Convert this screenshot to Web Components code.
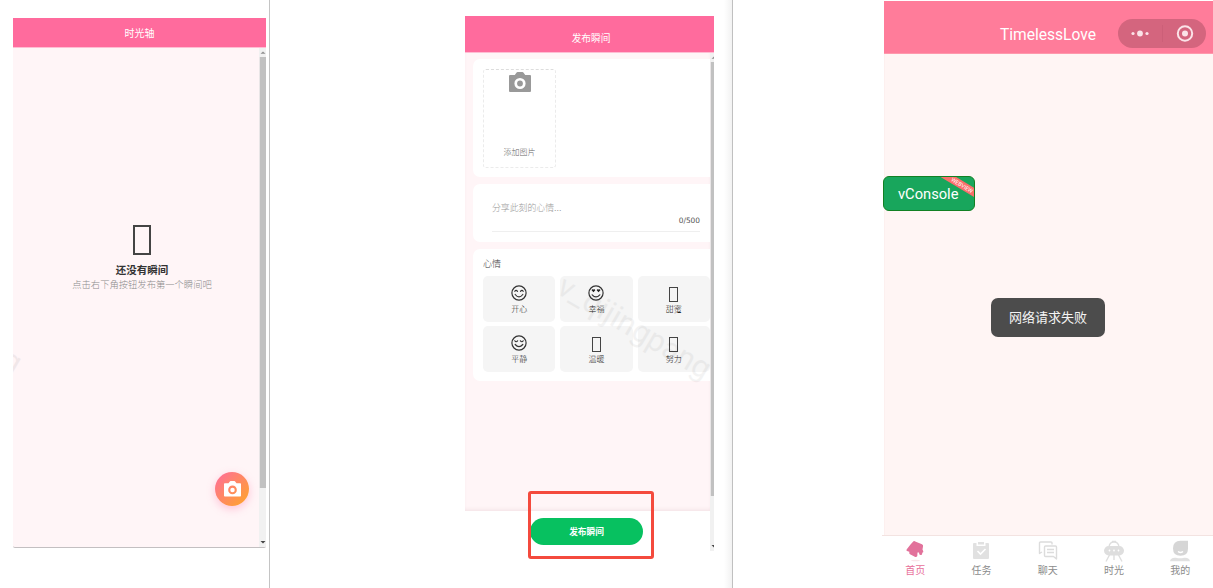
<!DOCTYPE html>
<html lang="zh-CN">
<head>
<meta charset="utf-8">
<title>TimelessLove</title>
<style>
  body {
    margin: 0;
    background: #fff;
    font-family: "Liberation Sans", "Noto Sans CJK SC", sans-serif;
  }
</style>
</head>
<body>
<love-board>
  <timeline-page slot="left"></timeline-page>
  <publish-page slot="middle"></publish-page>
  <home-page slot="right"></home-page>
</love-board>

<script>
function define(name, html) {
  const template = document.createElement('template');
  template.innerHTML = html;
  customElements.define(name, class extends HTMLElement {
    constructor() {
      super();
      this.attachShadow({ mode: 'open' });
      this.shadowRoot.appendChild(template.content.cloneNode(true));
    }
  });
}

// three columns with a thin divider between them
define('love-board', `
  <style>
    :host { display: grid; grid-template-columns: 270px 463px 480px; height: 588px; overflow: hidden; }
    div { box-sizing: border-box; height: 588px; overflow: hidden; }
    .left { padding: 18px 0 0 13px; border-right: 1px solid #c4c4c4; }
    .middle { padding: 16px 0 0 195px; border-right: 1px solid #c0c0c0; background: linear-gradient(to left, #f2f2f2, #fff 8px); }
    .right { padding: 1px 0 0 151px; }
  </style>
  <div class="left"><slot name="left"></slot></div>
  <div class="middle"><slot name="middle"></slot></div>
  <div class="right"><slot name="right"></slot></div>
`);

define('scroll-bar', `
  <style>
    :host { display: flex; flex-direction: column; width: 7px; background: #f1f1f1; overflow: hidden; }
    .thumb { box-sizing: border-box; width: 100%; height: var(--thumb); background: #c1c1c1; border-left: 1px solid #e9e6e7; }
    svg { display: block; width: 7px; height: 9px; flex: none; }
    .space { flex: 1; }
  </style>
  <svg viewBox="0 0 7 9"><path d="M1.5 5.8 4 3.4 6.5 5.8z" fill="#8f8f8f"/></svg>
  <div class="thumb"></div>
  <div class="space"></div>
  <svg viewBox="0 0 7 9"><path d="M1.5 3 6.5 3 4 5.4z" fill="#444"/></svg>
`);

define('camera-icon', `
  <style>
    :host { display: block; width: 22px; }
    svg { display: block; width: 100%; }
  </style>
  <svg viewBox="0 0 22 20">
    <path fill="currentColor" fill-rule="evenodd" d="M1 3h4.8l1.8-2.5Q8 0 8.500 0h5q.5 0 .9.500L16.200 3H21q1 0 1 1v15q0 1-1 1H1q-1 0-1-1V4q0-1 1-1zm10 2.900a5.600 5.600 0 1 0 0 11.200 5.600 5.600 0 0 0 0-11.200z"/>
    <circle cx="11" cy="11.500" r="2.900" fill="currentColor"/>
  </svg>
`);

define('timeline-page', `
  <style>
    :host { display: flex; flex-direction: column; width: 253px; height: 530px; position: relative; }
    header { height: 29px; line-height: 31px; background: #ff6b9d; color: #fff; font-size: 10px; text-align: center; border-bottom: 1px solid #ffbdd3; }
    .body { display: flex; flex: 1; min-height: 0; border-bottom: 1px solid #c3bfc1; border-radius: 0 0 2px 2px; overflow: hidden; background: #fff5f7; }
    .empty { flex: 1; display: flex; flex-direction: column; align-items: center; padding: 177px 0 0 12px; box-sizing: border-box; position: relative; }
    .box { box-sizing: border-box; width: 18px; height: 30px; border: 2px solid #444; flex: none; }
    .title { margin-top: 6px; font-size: 10.500px; line-height: 18px; font-weight: bold; color: #333; }
    .hint { font-size: 9.300px; line-height: 13px; color: #8c8c8c; font-weight: 300; white-space: nowrap; }
    /* tail of the page watermark */
    .mark { position: absolute; left: -10px; top: 295px; font: 31px/36px Roboto, sans-serif; color: #000; opacity: .05; transform: rotate(30.500deg); }
    .fab { position: absolute; left: 202px; top: 454px; width: 34px; height: 34px; border-radius: 50%; display: flex; align-items: center; justify-content: center; background: linear-gradient(135deg, #ff6b9d, #ffa726); box-shadow: 0 3px 8px rgba(255, 107, 157, .35); color: #fff; }
    .fab camera-icon { width: 17px; }
    scroll-bar { --thumb: 431px; }
  </style>
  <header>时光轴</header>
  <div class="body">
    <div class="empty">
      <div class="box"></div>
      <div class="title">还没有瞬间</div>
      <div class="hint">点击右下角按钮发布第一个瞬间吧</div>
      <div class="mark">g</div>
    </div>
    <scroll-bar></scroll-bar>
  </div>
  <div class="fab"><camera-icon></camera-icon></div>
`);

define('mood-item', `
  <style>
    :host { display: flex; flex-direction: column; align-items: center; box-sizing: border-box; height: 45.500px; padding-top: 8.500px; background: #f5f5f5; border-radius: 5px; color: #222; font-size: 8px; line-height: 12px; font-weight: 300; }
    .face { height: 19.500px; display: flex; align-items: flex-start; }
  </style>
  <div class="face"><slot name="face"></slot></div>
  <slot></slot>
`);

define('publish-page', `
  <style>
    :host { display: flex; flex-direction: column; width: 249px; height: 536px; position: relative; }
    header { height: 36px; line-height: 45px; padding-left: 3px; background: #ff6b9d; color: #fff; font-size: 9.700px; text-align: center; border-bottom: 1px solid #ffbdd3; }
    .body { flex: 1; display: flex; min-height: 0; }
    .main { width: 245px; display: flex; flex-direction: column; overflow: hidden; position: relative; }
    .feed { height: 458px; box-sizing: border-box; background: #fff5f7; padding: 6px 0 0 8px; box-shadow: inset 0 -3px 4px -2px rgba(120, 40, 60, .1); display: flex; flex-direction: column; gap: 7px; }
    .card { box-sizing: border-box; width: 250px; background: #fff; border-radius: 7px; padding: 10px; }
    .photos { height: 118px; }
    .text { height: 58px; padding: 18px 10px 0 19px; }
    .moods { height: 132px; }
    .add { box-sizing: border-box; width: 73px; height: 99px; border: 1px dashed #ebebeb; border-top-color: #ddd; border-radius: 3px; display: flex; flex-direction: column; align-items: center; justify-content: space-between; padding: 2px 0 8px; color: #999; font-size: 8px; line-height: 13px; }
    .add span { color: #666; font-weight: 300; }
    .field { width: 208px; border-bottom: 1px solid #efefef; height: 29px; display: flex; flex-direction: column; font-size: 8.900px; line-height: 13px; color: #999; font-weight: 300; }
    .count { align-self: flex-end; font: 7.400px/12px "DejaVu Sans", sans-serif; color: #555; }
    .label { font-size: 9px; line-height: 10px; color: #333; font-weight: 300; }
    .grid { display: grid; grid-template-columns: repeat(3, 72.300px); gap: 4.500px 5px; margin-top: 7px; }
    svg { width: 16px; height: 16px; display: block; fill: none; stroke: #333; stroke-width: 1.200; stroke-linecap: round; }
    .box { box-sizing: border-box; width: 9px; height: 15px; margin-top: 2px; border: 1px solid #444; }
    .mark { position: absolute; left: 95px; top: 213px; font: 31px/36px Roboto, sans-serif; color: #000; opacity: .045; transform: rotate(30.500deg); transform-origin: 0 50%; white-space: nowrap; }
    .submit { width: 113px; height: 27px; margin: 7px 0 0 65px; border-radius: 14px; background: #07c160; color: #fff; font-size: 8.700px; line-height: 28px; font-weight: bold; text-align: center; }
    .frame { position: absolute; left: 63px; top: 475px; width: 126px; height: 68px; box-sizing: border-box; border: 3px solid #f44a3d; border-radius: 3px; }
    scroll-bar { width: 4px; --thumb: 434px; height: 498px; }
  </style>
  <header>发布瞬间</header>
  <div class="body">
    <div class="main">
      <div class="feed">
        <div class="card photos">
          <div class="add"><camera-icon></camera-icon><span>添加图片</span></div>
        </div>
        <div class="card text">
          <div class="field"><span>分享此刻的心情...</span><span class="count">0/500</span></div>
        </div>
        <div class="card moods">
          <div class="label">心情</div>
          <div class="grid">
            <mood-item>
              <svg slot="face" viewBox="0 0 16 16"><circle cx="8" cy="8" r="7.100"/><path d="M3.800 6.300Q5 4.300 6.500 6.300M9.500 6.300Q11 4.300 12.200 6.300M4.200 9.500Q8 14.300 11.800 9.500"/></svg>开心
            </mood-item>
            <mood-item>
              <svg slot="face" viewBox="0 0 16 16"><circle cx="8" cy="8" r="7.100"/><path d="M4.200 9.800Q8 14 11.800 9.800"/><path d="M5.500 7.300 3.600 5.200Q3.900 3.600 5.500 4.600 7 3.600 7.300 5.200zM10.500 7.300 8.700 5.200Q9 3.600 10.500 4.600 12.100 3.600 12.400 5.200z" fill="#222" stroke="none"/></svg>幸福
            </mood-item>
            <mood-item><div slot="face" class="box"></div>甜蜜</mood-item>
            <mood-item>
              <svg slot="face" viewBox="0 0 16 16"><circle cx="8" cy="8" r="7.100"/><path d="M3.800 5.800Q5 7.700 6.600 5.800M9.400 5.800Q11 7.700 12.200 5.800M4.200 9.500Q8 13.800 11.800 9.500"/></svg>平静
            </mood-item>
            <mood-item><div slot="face" class="box"></div>温暖</mood-item>
            <mood-item><div slot="face" class="box"></div>努力</mood-item>
          </div>
        </div>
      </div>
      <div class="submit">发布瞬间</div>
      <div class="mark">v_qijingpang</div>
    </div>
    <scroll-bar></scroll-bar>
  </div>
  <div class="frame"></div>
`);

define('tab-item', `
  <style>
    :host { display: flex; flex-direction: column; align-items: center; color: #8c8c8c; font-size: 10px; line-height: 15px; padding-top: 4px; }
    :host([active]) { color: #e8709a; }
    .icon { height: 22px; margin-bottom: 1px; }
  </style>
  <div class="icon"><slot name="icon"></slot></div>
  <slot></slot>
`);

define('home-page', `
  <style>
    :host { display: flex; flex-direction: column; width: 329px; height: 587px; position: relative; font-family: Roboto, "Noto Sans CJK SC", sans-serif; }
    header { display: flex; align-items: center; justify-content: flex-end; height: 53px; box-sizing: border-box; padding: 13px 7px 0 0; background: #ff7c9a; border-bottom: 1px solid #ff98ac; color: #fff; font-size: 15.600px; gap: 22px; }
    header span { padding-top: 2px; }
    .capsule { display: block; width: 88px; height: 29px; }
    main { flex: 1; background: #fff5f4; border-left: 1px solid #fdf0ef; }
    .console { position: absolute; left: -1px; top: 175px; width: 92px; height: 35px; box-sizing: border-box; border: 1.500px solid #128023; border-radius: 6px; background: #18a65c; color: #fff; font-size: 14.700px; line-height: 34px; padding-left: 14px; overflow: hidden; }
    .ribbon { position: absolute; left: 48px; top: 3px; width: 56px; height: 8px; line-height: 8px; background: #fb6d6b; font-size: 5.500px; text-align: center; text-indent: 5px; transform: rotate(31deg); }
    .toast { position: absolute; left: 107px; top: 297px; width: 114px; height: 39px; line-height: 39px; border-radius: 7px; background: #4c4c4c; color: #f4f4f4; font-size: 13px; text-align: center; }
    nav { display: grid; grid-template-columns: repeat(5, 66.300px); height: 53px; box-sizing: border-box; border-top: 1px solid #f3e3e1; background: #fff; margin-left: -2px; }
    nav svg { display: block; width: 22px; height: 22px; }
  </style>
  <header>
    <span>TimelessLove</span>
    <svg class="capsule" viewBox="0 0 88 29">
      <rect width="88" height="29" rx="14.500" fill="#d4657e"/>
      <path d="M44.500 6v17" stroke="#cc5f78"/>
      <g fill="#fbe3e8"><circle cx="15" cy="14.500" r="1.600"/><circle cx="22" cy="14.500" r="2.900"/><circle cx="29" cy="14.500" r="1.600"/><circle cx="67" cy="14.500" r="3"/></g>
      <circle cx="67" cy="14.500" r="7.200" fill="none" stroke="#fbe3e8" stroke-width="2"/>
    </svg>
  </header>
  <main></main>
  <nav>
    <tab-item active>
      <svg slot="icon" viewBox="0 0 22 22"><ellipse cx="11.500" cy="20.500" rx="4.500" ry=".8" fill="#fae6ea"/><path d="M9.500 1.300Q10.300.8 11.200 1.400L18 4.300Q19.500 5 19 6.500L18.500 9.500 19.300 11.300Q19.500 12.500 18.300 12.800L18 14.500Q16.300 15.800 15.300 14.300L15 12.500H13.500L13.300 16Q12.500 17.500 10.800 16.800L6 14.300Q5 13.800 5.300 11.800L3 11Q1.800 10.300 2.800 9.200L6.500 4.500z" fill="#e2729b"/></svg>首页
    </tab-item>
    <tab-item>
      <svg slot="icon" viewBox="0 0 22 22"><path d="M4 3h2.500v3h9V3H18q1 0 1 1v14q0 1-1 1H4q-1 0-1-1V4q0-1 1-1z" fill="#e1e1e1"/><path d="M8 2h6v2.500H8z" fill="#e1e1e1"/><path d="m7.500 11 3 3 5-5" fill="none" stroke="#fff" stroke-width="1.600"/></svg>任务
    </tab-item>
    <tab-item>
      <svg slot="icon" viewBox="0 0 22 22" fill="none" stroke="#dcdcdc" stroke-width="1.400" stroke-linejoin="round"><path d="M15 4.500V3q0-1-1-1H3.500q-1 0-1 1v10.500L5 12"/><path d="M8.500 6h10q1 0 1 1v12l-3-2.500h-8q-1 0-1-1V7q0-1 1-1zM10 9.500h7M10 12.500h7"/></svg>聊天
    </tab-item>
    <tab-item>
      <svg slot="icon" viewBox="0 0 22 22"><g fill="none" stroke="#dedede" stroke-width="1.400"><path d="M6 7Q6.500 2 11 2T16 7M9 1.500h4M7 14 3 21.500M11 14v6M15 14l4 7.500"/></g><rect x="1" y="6" width="20" height="9.500" rx="4.700" fill="#dedede"/><g fill="#fff"><circle cx="6.500" cy="10.500" r=".9"/><circle cx="11" cy="10.500" r=".9"/><circle cx="15.500" cy="10.500" r=".9"/></g></svg>时光
    </tab-item>
    <tab-item>
      <svg slot="icon" viewBox="0 0 22 22"><path d="M11.500.8H19v8q0 7-7.500 7T4 8.500Q4 .8 11.500.8z" fill="#d6d6d6"/><path d="M9 11.500q2.500 2 5 0" stroke="#fff" stroke-width="1.400" fill="none"/><path d="M1 21.300q.5-4 6-3.500 4 1 8 0 5.500-.5 6 3.500z" fill="#e1e1e1"/></svg>我的
    </tab-item>
  </nav>
  <div class="console">vConsole<div class="ribbon">WEBVIEW</div></div>
  <div class="toast">网络请求失败</div>
`);
</script>
</body>
</html>
